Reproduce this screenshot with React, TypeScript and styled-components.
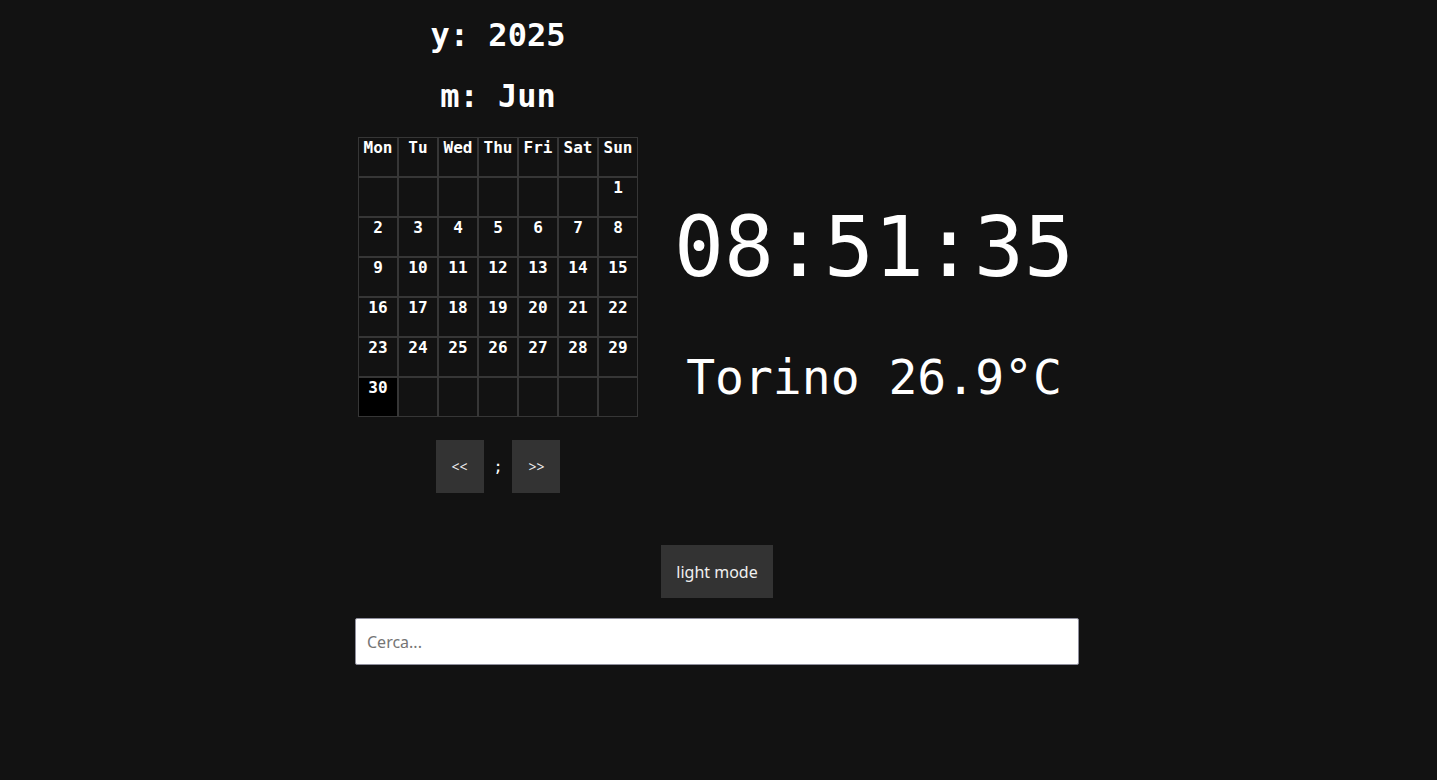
import React from 'react';
import styled, {createGlobalStyle} from 'styled-components';

const GlobalStyle = createGlobalStyle`
  html, body {
    margin: 0;
    padding: 0;
    background: #121212;
    color: #fff;
    font-family: "DejaVu Sans Mono", monospace;
  }
`

const Page = styled.div`
  display: flex;
  flex-direction: column;
  align-items: center;
  min-height: 780px;
  padding-right: 3px;
`

const Top = styled.div`
  display: flex;
  width: 724px;
  gap: 24px;
  align-items: flex-start;
`

const LeftColumn = styled.div`
  width: 286px;
  display: flex;
  flex-direction: column;
  align-items: center;
`

const RightColumn = styled.div`
  flex: 1;
  display: flex;
  flex-direction: column;
  align-items: center;
  padding: 199px 0 0 4px;
`

const Title = styled.h1<{$first?: boolean}>`
  margin: ${p => p.$first ? '17px' : '24px'} 0 0;
  font-size: 32px;
  line-height: 37px;
  font-weight: bold;
`

const Calendar = styled.div`
  margin-top: 22px;
  display: grid;
  grid-template-columns: repeat(7, 40px);
  grid-auto-rows: 40px;
`

const Cell = styled.div<{$today?: boolean}>`
  box-sizing: border-box;
  border: 1px solid #363636;
  background: ${p => p.$today ? '#000' : 'transparent'};
  text-align: center;
  padding-top: 0;
  font-size: 16px;
  line-height: 19px;
  font-weight: bold;
`

const Nav = styled.div`
  margin-top: 23px;
  display: flex;
  align-items: center;
  font-size: 16px;
  white-space: pre;
`

const Button = styled.button<{$small?: boolean}>`
  height: 53px;
  padding: 0 ${p => p.$small ? '16px' : '15px'};
  border: none;
  border-radius: 0;
  background: #333;
  color: #f0f0f0;
  font-family: "Noto Sans", sans-serif;
  font-size: ${p => p.$small ? '14px' : '16px'};
  cursor: pointer;
`

const Clock = styled.div`
  font-size: 83px;
  line-height: 97px;
`

const Weather = styled.div`
  margin-top: 53px;
  font-size: 48px;
  line-height: 56px;
`

const ModeButton = styled(Button)`
  margin-top: 52px;
`

const Search = styled.input`
  margin-top: 20px;
  box-sizing: border-box;
  width: 724px;
  height: 47px;
  padding: 0 11px;
  border: 1px solid #8f8f9d;
  border-radius: 2px;
  background: #fff;
  font-family: "Noto Sans", sans-serif;
  font-size: 16px;
  color: #222;
  outline: none;
  &::placeholder {
    color: #757575;
  }
`

const days = ['Mon', 'Tu', 'Wed', 'Thu', 'Fri', 'Sat', 'Sun']

// giugno 2025: il primo è domenica
const cells: (number | null)[] = [
  ...Array(6).fill(null),
  ...Array.from({length: 30}, (_, i) => i + 1),
  ...Array(6).fill(null),
]

const App: React.FC = () => {
  const today = 30
  return (
    <Page>
      <GlobalStyle/>
      <Top>
        <LeftColumn>
          <Title $first>y: 2025</Title>
          <Title>m: Jun</Title>
          <Calendar>
            {days.map(d => <Cell key={d}>{d}</Cell>)}
            {cells.map((n, i) => (
              <Cell key={i} $today={n === today}>{n ?? ''}</Cell>
            ))}
          </Calendar>
          <Nav>
            <Button $small>{'<<'}</Button>
            {' ; '}
            <Button $small>{'>>'}</Button>
          </Nav>
        </LeftColumn>
        <RightColumn>
          <Clock>08:51:35</Clock>
          <Weather>Torino 26.9°C</Weather>
        </RightColumn>
      </Top>
      <ModeButton>light mode</ModeButton>
      <Search placeholder={'Cerca...'}/>
    </Page>
  )
}

export default App
